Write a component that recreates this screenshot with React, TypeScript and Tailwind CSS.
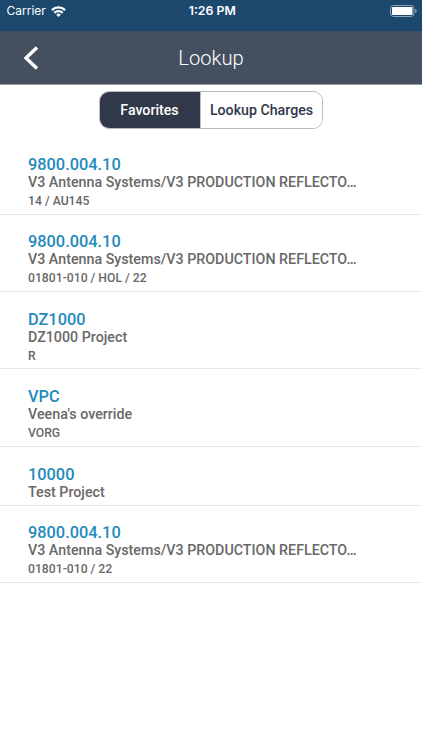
type Charge = {
  code: string
  name: string
  detail?: string
}

const charges: Charge[] = [
  { code: "9800.004.10", name: "V3 Antenna Systems/V3 PRODUCTION REFLECTO…", detail: "14 / AU145" },
  { code: "9800.004.10", name: "V3 Antenna Systems/V3 PRODUCTION REFLECTO…", detail: "01801-010 / HOL / 22" },
  { code: "DZ1000", name: "DZ1000 Project", detail: "R" },
  { code: "VPC", name: "Veena's override", detail: "VORG" },
  { code: "10000", name: "Test Project" },
  { code: "9800.004.10", name: "V3 Antenna Systems/V3 PRODUCTION REFLECTO…", detail: "01801-010 / 22" },
]

function StatusBar() {
  return (
    <div className="grid h-[31px] grid-cols-[1fr_auto_1fr] items-start bg-[#1c486d] pt-[3px] pr-[4px] pl-[6.5px] font-['Inter',sans-serif] text-white">
      <div className="flex items-center gap-[5px] text-[12px] leading-4">
        <span>Carrier</span>
        <svg width="15" height="11" viewBox="0 0 15 11" fill="none" stroke="currentColor" strokeWidth="2.2">
          <path d="M.9 4.1a9.4 9.4 0 0 1 13.2 0" />
          <path d="M3.3 6.900a6 6 0 0 1 8.400 0" />
          <path d="M7.5 11 5.200 8.700a3.300 3.300 0 0 1 4.600 0z" fill="currentColor" stroke="none" />
        </svg>
      </div>
      <span className="text-[12.3px] font-semibold leading-4">1:26 PM</span>
      <svg className="mt-0.5 justify-self-end" width="28" height="12" viewBox="0 0 28 12" fill="none">
        <rect x="0.5" y="0.5" width="23.5" height="11" rx="3" stroke="white" strokeOpacity="0.5" />
        <rect x="2" y="2" width="20.5" height="8" rx="1" fill="white" />
        <path d="M25.2 4v4c.9-.3 1.4-1.1 1.4-2s-.5-1.7-1.4-2z" fill="white" fillOpacity="0.5" />
      </svg>
    </div>
  )
}

function Header() {
  return (
    <header className="grid h-[54px] grid-cols-[60px_1fr_60px] items-center border-b border-[#9a9aa8] bg-[#444f60] text-white">
      <button className="pl-[23px]" aria-label="Back">
        <svg width="16" height="24" viewBox="0 0 16 24" fill="none" stroke="currentColor" strokeWidth="3.4">
          <path d="M14 1.5 3 12l11 10.5" />
        </svg>
      </button>
      <h1 className="pt-[2px] text-center text-[20.2px] font-light">Lookup</h1>
    </header>
  )
}

function Tabs() {
  return (
    <div className="flex justify-center pt-[6px]">
      <div className="flex h-[38px] w-[224px] overflow-hidden rounded-[10px] border border-[#b9bac2] text-[14.2px] font-medium">
        <button className="w-[100px] bg-[#30384a] pt-px pr-px text-white">Favorites</button>
        <button className="flex-1 border-l border-[#b9bac2] bg-white pt-px whitespace-nowrap text-[#30384a]">Lookup Charges</button>
      </div>
    </div>
  )
}

function ChargeRow({ code, name, detail }: Charge) {
  return (
    <li className="border-b border-[#e8e8e8] pt-[17.8px] pr-[60px] pb-[3.6px] pl-7 font-medium text-[#686868]">
      <div className="text-[16.35px] leading-[19px] text-[#238abb]">{code}</div>
      <div className="text-[14.27px] leading-[17.4px] whitespace-nowrap">{name}</div>
      {detail && <div className="-mb-[0.6px] pt-[1.6px] text-[12.2px] leading-[17.6px]">{detail}</div>}
    </li>
  )
}

export default function App() {
  return (
    <div className="min-h-screen bg-white font-['Roboto',sans-serif]">
      <StatusBar />
      <Header />
      <Tabs />
      <ul className="mt-[8.2px]">
        {charges.map((charge, i) => (
          <ChargeRow key={i} {...charge} />
        ))}
      </ul>
    </div>
  )
}
